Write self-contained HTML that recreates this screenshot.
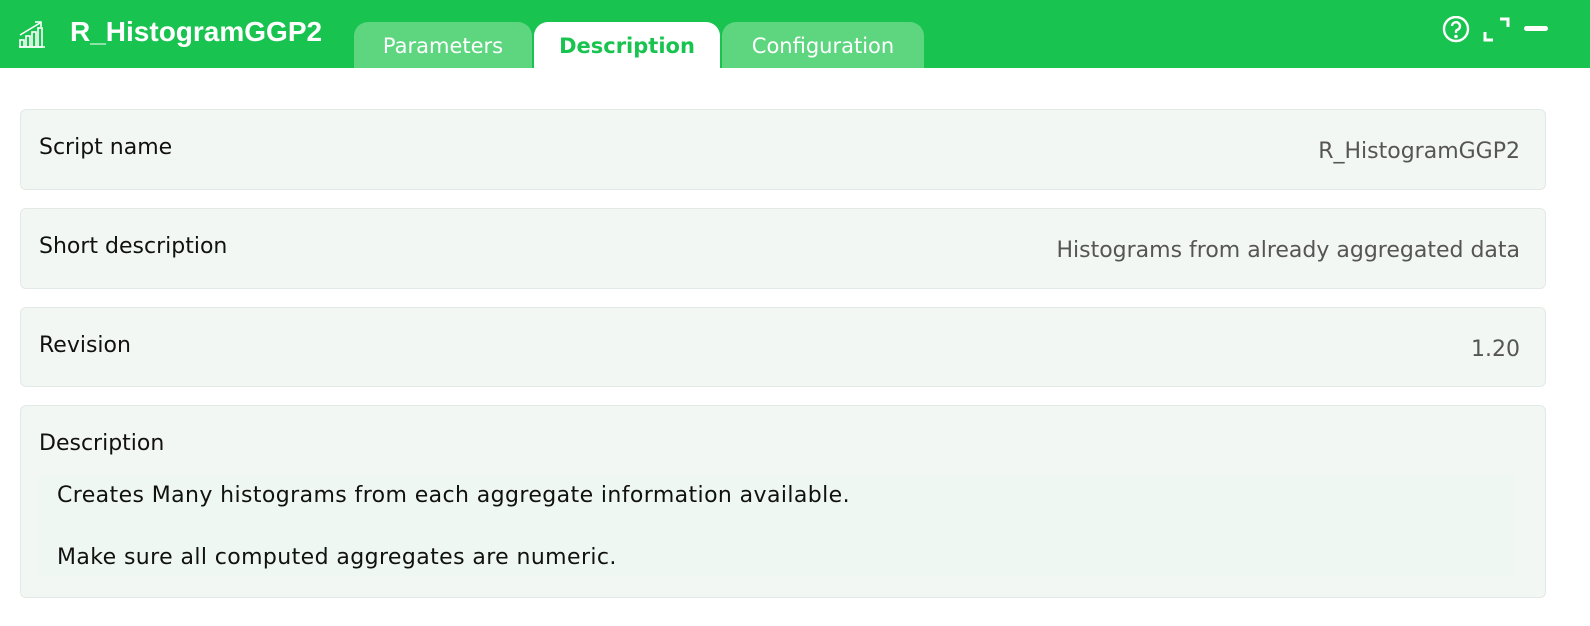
<!DOCTYPE html>
<html><head><style>
*{margin:0;padding:0;box-sizing:border-box}
body{width:1590px;height:626px;background:#fff;font-family:"DejaVu Sans",sans-serif;position:relative;overflow:hidden}
.hdr{position:absolute;left:0;top:0;width:1590px;height:68px;background:#19c34f}
.title{position:absolute;left:70px;top:16px;color:#fff;font-weight:bold;font-size:28px;font-family:"Liberation Sans",sans-serif}
.tab{position:absolute;top:22px;height:46px;border-radius:14px 14px 0 0;background:#5dd67f;color:#fff;font-size:21px;text-align:center;line-height:48px}
.card{position:absolute;left:20px;width:1526px;background:#f3f7f4;border:1px solid #e3e9e5;border-radius:6px}
.lab{position:absolute;left:18px;top:25px;font-size:22px;color:#111}
.val{position:absolute;right:25px;top:29px;font-size:22px;color:#555}
.inner{position:absolute;left:18px;top:69px;width:1476px;height:101px;background:#eff7f2}
.inner p{position:absolute;left:18px;font-size:22px;color:#111;letter-spacing:0.4px}
</style></head><body>
<div class="hdr">
<svg style="position:absolute;left:18px;top:19px" width="28" height="30" viewBox="0 0 28 30" fill="none" stroke="#fff" stroke-width="1.6">
<rect x="2" y="21" width="4" height="7"/><rect x="8" y="17" width="4" height="11"/><rect x="14" y="13" width="4" height="15"/><rect x="20" y="9" width="4" height="19"/><path d="M1 28h26"/><path d="M2 16L22 4"/><path d="M17 3h6v5"/></svg>
<div class="title">R_HistogramGGP2</div>
<div class="tab" style="left:354px;width:178px">Parameters</div>
<div class="tab" style="left:534px;width:186px;background:#fff;color:#19c34f;font-weight:bold">Description</div>
<div class="tab" style="left:722px;width:202px">Configuration</div>
<svg style="position:absolute;left:1442px;top:16px" width="30" height="28" viewBox="0 0 30 28" fill="none" stroke="#fff" stroke-width="2.4">
<circle cx="14" cy="13" r="12"/><path d="M10 10a4 4 0 1 1 5 4c-1 .5-1 1-1 3"/><circle cx="14" cy="20.5" r=".6" fill="#fff"/></svg>
<svg style="position:absolute;left:1482px;top:16px" width="30" height="28" viewBox="0 0 30 28" fill="none" stroke="#fff" stroke-width="3">
<path d="M3 16v8h8"/><path d="M18 3h8v8"/></svg>
<div style="position:absolute;left:1524px;top:26px;width:24px;height:5px;background:#fff;border-radius:3px"></div>
</div>
<div class="card" style="top:109px;height:81px"><div class="lab">Script name</div><div class="val">R_HistogramGGP2</div></div>
<div class="card" style="top:208px;height:81px"><div class="lab">Short description</div><div class="val">Histograms from already aggregated data</div></div>
<div class="card" style="top:307px;height:80px"><div class="lab">Revision</div><div class="val">1.20</div></div>
<div class="card" style="top:405px;height:193px"><div class="lab">Description</div>
<div class="inner"><p style="top:8px">Creates Many histograms from each aggregate information available.</p><p style="top:70px">Make sure all computed aggregates are numeric.</p></div></div>
</body></html>
